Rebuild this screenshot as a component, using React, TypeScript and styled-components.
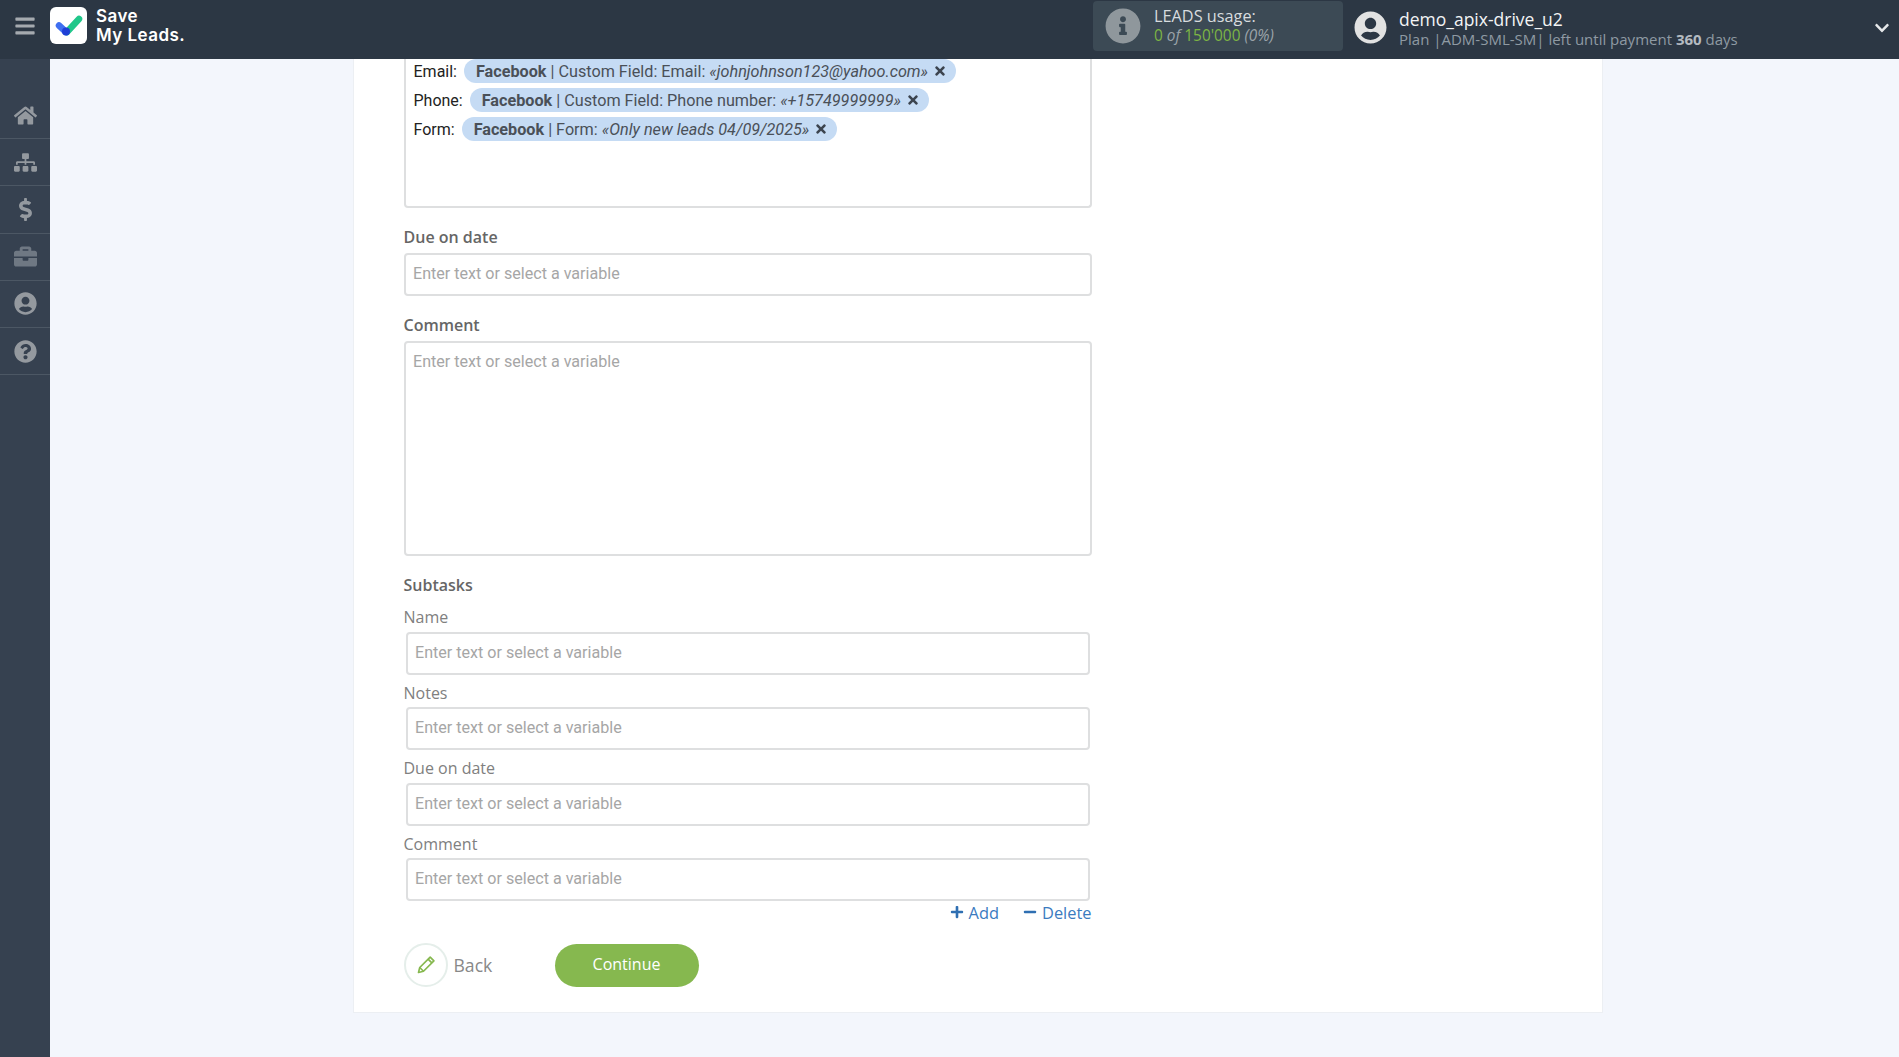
import React from "react";
import styled, { createGlobalStyle } from "styled-components";
import {
  FaBars, FaHome, FaSitemap, FaDollarSign, FaBriefcase, FaUserCircle, FaQuestionCircle,
  FaInfoCircle, FaChevronDown, FaTimes, FaPlus, FaMinus,
} from "react-icons/fa";

const Global = createGlobalStyle`
  html, body { margin: 0; padding: 0; height: 100%; overflow: hidden; }
  body { font-family: "Open Sans", sans-serif; background: #f3f6fc; }
  * { box-sizing: border-box; }
`;

const Page = styled.div`
  width: 1899px; height: 1057px; display: flex; flex-direction: column; overflow: hidden;
`;
const Header = styled.header`
  height: 59px; flex: none; background: #2c3744; display: flex; align-items: center; color: #fff;
`;
const Burger = styled.button`
  width: 50px; height: 59px; flex: none; border: 0; padding: 0 0 8px; background: none; color: #a5aaaf;
  display: flex; align-items: center; justify-content: center; font-size: 22px;
`;
const LogoBox = styled.div`
  width: 37px; height: 37px; margin-top: -8px; background: #fff; border-radius: 6px; flex: none;
  display: flex; align-items: center; justify-content: center;
`;
const LogoText = styled.div`
  margin: -8px 0 0 9px; font-family: "Inter", sans-serif; font-weight: 600; font-size: 17px; line-height: 19px; letter-spacing: 0.45px;
`;
const Spacer = styled.div` flex: 1; `;
const Usage = styled.div`
  width: 250px; height: 50px; margin: -7px 11px 0 0; padding: 0 12px; background: #3c4a55; border-radius: 4px;
  display: flex; align-items: center; gap: 13px;
`;
const UsageIcon = styled(FaInfoCircle)` font-size: 36px; color: #8f979c; flex: none; `;
const UsageText = styled.div` font-size: 16.3px; line-height: 20px; color: #d8dcdf; margin-top: 0; `;
const UsageLine = styled.div`
  font-size: 15.4px; color: #7db544;
  em { color: #9aa3a9; font-style: italic; }
`;
const UserIcon = styled(FaUserCircle)` font-size: 33px; color: #e2e2e2; flex: none; margin-top: -5px; `;
const UserText = styled.div` margin: -3px 0 0 12px; width: 475px; `;
const UserName = styled.div` font-size: 17.5px; line-height: 22px; color: #f3f4f5; `;
const UserPlan = styled.div`
  font-size: 15px; line-height: 18px; color: #8f9aa3;
  b { font-weight: 700; color: #b4bac0; }
`;
const Chevron = styled(FaChevronDown)` font-size: 16px; color: #e6e8ea; margin: -3px 9px 0 0; flex: none; `;

const Body = styled.div` flex: 1; display: flex; min-height: 0; `;
const Sidebar = styled.nav`
  width: 50px; flex: none; background: #364150; padding-top: 33px;
`;
const NavItem = styled.div<{ $dim?: boolean }>`
  height: 47.2px; border-bottom: 1px solid #4c5764; display: flex; align-items: center; justify-content: center;
  color: ${p => (p.$dim ? "#6f7883" : "#94999f")}; font-size: 23px;
`;
const Main = styled.main`
  flex: 1; background: #f3f6fc; padding-left: 303px;
`;
const Card = styled.section`
  width: 1250px; height: 954px; background: #fff; border: 1px solid #eceff3; border-top: 0;
  padding: 0 50px 0 49.5px;
  display: flex; flex-direction: column;
`;
const VarBox = styled.div`
  width: 688px; height: 149px; border: 2px solid #dedfe0; border-top: 0; border-radius: 0 0 4px 4px; padding: 0 8px;
  display: flex; flex-direction: column; gap: 5px;
`;
const VarRow = styled.div`
  height: 24px; display: flex; align-items: center; gap: 7px; font-family: "Roboto", sans-serif; font-size: 16px; color: #222;
`;
const Pill = styled.span`
  height: 24px; padding: 0 9px 0 12px; background: #c5dbf4; border-radius: 12px; display: inline-flex; align-items: center;
  font-family: "Roboto", sans-serif; font-size: 16.2px; color: #4a5058; white-space: pre;
  b { font-weight: 700; }
  i { font-style: italic; }
`;
const PillX = styled(FaTimes)` font-size: 14px; margin-left: 5px; color: #3c444f; `;
const Label = styled.div<{ $sub?: boolean }>`
  font-size: 16px; line-height: 20px; font-weight: ${p => (p.$sub ? 400 : 600)}; color: ${p => (p.$sub ? "#808080" : "#666")};
`;
const Field = styled.div<{ $tall?: boolean; $inset?: boolean }>`
  width: ${p => (p.$inset ? "684px" : "688px")}; margin-left: ${p => (p.$inset ? "2px" : "0")};
  height: ${p => (p.$tall ? "215px" : "43px")}; flex: none;
  border: 2px solid #dedfe0; border-radius: 4px;
  padding: ${p => (p.$tall ? "9px 7.5px 0" : "0 7.5px 1px")};
  display: flex; align-items: ${p => (p.$tall ? "flex-start" : "center")};
  font-family: "Roboto", sans-serif; font-size: 16.1px; line-height: 20px; color: #a6a6a6;
`;
const Group = styled.div<{ $top: number }>` margin-top: ${p => p.$top}px; display: flex; flex-direction: column; gap: 6px; `;
const SubGroup = styled.div<{ $top: number; $gap?: number }>`
  margin-top: ${p => p.$top}px; display: flex; flex-direction: column; gap: ${p => p.$gap ?? 5}px;
`;
const Actions = styled.div`
  width: 688px; display: flex; justify-content: flex-end; gap: 24px; height: 22px; align-items: center;
`;
const ActionLink = styled.a`
  display: inline-flex; align-items: center; gap: 5px; font-size: 16.4px; color: #3b7bbf;
  svg { font-size: 14px; color: #2f6fb2; }
`;
const Buttons = styled.div` margin-top: 20px; display: flex; align-items: center; `;
const BackCircle = styled.div`
  width: 44px; height: 44px; border: 2px solid #e5eeea; border-radius: 50%; display: flex; align-items: center; justify-content: center; flex: none;
`;
const BackLabel = styled.span` margin-left: 6px; width: 101px; font-size: 17.6px; color: #888; `;
const Continue = styled.button`
  width: 144px; height: 43px; border: 0; border-radius: 22px; background: #86b84f; color: #fff;
  font-family: "Open Sans", sans-serif; font-size: 16px; padding: 0 0 2px;
`;

const vars = [
  { k: "Email:", src: " | Custom Field: Email: ", val: "«johnjohnson123@yahoo.com»" },
  { k: "Phone:", src: " | Custom Field: Phone number: ", val: "«+15749999999»" },
  { k: "Form:", src: " | Form: ", val: "«Only new leads 04/09/2025»" },
];
const PH = "Enter text or select a variable";

export default function App() {
  return (
    <Page>
      <Global />
      <Header>
        <Burger aria-label="menu"><FaBars /></Burger>
        <LogoBox>
          <svg width="30" height="30" viewBox="0 0 30 30">
            <path d="M5 14.5 L12 21" stroke="#3f6ff0" strokeWidth="6.5" strokeLinecap="round" />
            <path d="M13 21 L25 8" stroke="#20c78a" strokeWidth="6.5" strokeLinecap="round" />
            <circle cx="12" cy="20.5" r="4" fill="#1f3fd6" />
          </svg>
        </LogoBox>
        <LogoText>Save<br />My Leads.</LogoText>
        <Spacer />
        <Usage>
          <UsageIcon />
          <UsageText>
            LEADS usage:
            <UsageLine>0 <em>of</em> 150'000 <em>(0%)</em></UsageLine>
          </UsageText>
        </Usage>
        <UserIcon />
        <UserText>
          <UserName>demo_apix-drive_u2</UserName>
          <UserPlan>Plan |ADM-SML-SM| left until payment <b>360</b> days</UserPlan>
        </UserText>
        <Chevron />
      </Header>
      <Body>
        <Sidebar>
          <NavItem><FaHome /></NavItem>
          <NavItem><FaSitemap /></NavItem>
          <NavItem><FaDollarSign /></NavItem>
          <NavItem $dim><FaBriefcase /></NavItem>
          <NavItem><FaUserCircle /></NavItem>
          <NavItem><FaQuestionCircle /></NavItem>
        </Sidebar>
        <Main>
          <Card>
            <VarBox>
              {vars.map(v => (
                <VarRow key={v.k}>
                  <span>{v.k}</span>
                  <Pill><b>Facebook</b>{v.src}<i>{v.val}</i><PillX /></Pill>
                </VarRow>
              ))}
            </VarBox>
            <Group $top={19}>
              <Label>Due on date</Label>
              <Field>{PH}</Field>
            </Group>
            <Group $top={19}>
              <Label>Comment</Label>
              <Field $tall>{PH}</Field>
            </Group>
            <SubGroup $top={19}>
              <Label>Subtasks</Label>
            </SubGroup>
            <SubGroup $top={12}><Label $sub>Name</Label><Field $inset>{PH}</Field></SubGroup>
            <SubGroup $top={8} $gap={4}><Label $sub>Notes</Label><Field $inset>{PH}</Field></SubGroup>
            <SubGroup $top={8}><Label $sub>Due on date</Label><Field $inset>{PH}</Field></SubGroup>
            <SubGroup $top={8} $gap={4}><Label $sub>Comment</Label><Field $inset>{PH}</Field></SubGroup>
            <Actions>
              <ActionLink><FaPlus />Add</ActionLink>
              <ActionLink><FaMinus />Delete</ActionLink>
            </Actions>
            <Buttons>
              <BackCircle>
                <svg width="20" height="20" viewBox="0 0 24 24" fill="none" stroke="#86b84f" strokeWidth="2" strokeLinejoin="round">
                  <path d="M3 21 L4.5 15 L17 2.5 L21.5 7 L9 19.5 Z" />
                  <path d="M14.5 5 L19 9.5" />
                  <path d="M4.5 15 L9 19.5" />
                </svg>
              </BackCircle>
              <BackLabel>Back</BackLabel>
              <Continue>Continue</Continue>
            </Buttons>
          </Card>
        </Main>
      </Body>
    </Page>
  );
}
